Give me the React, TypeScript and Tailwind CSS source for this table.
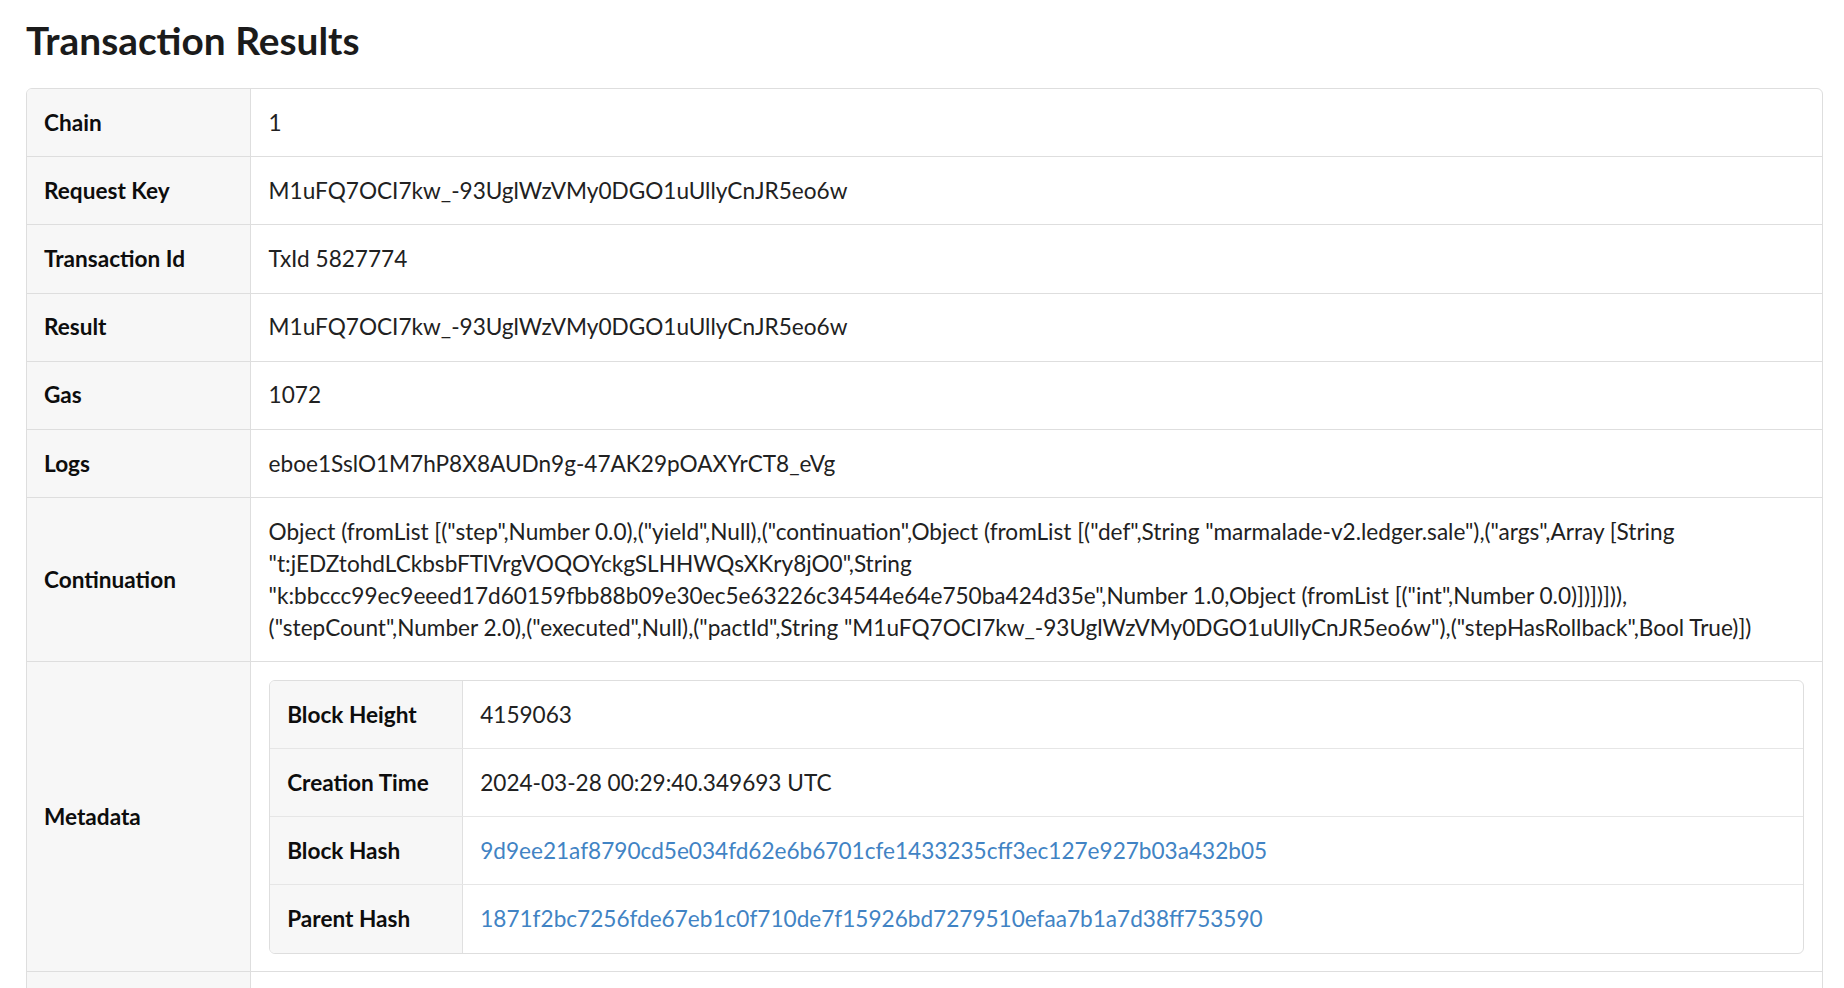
const rows: { label: string; value: string }[] = [
  { label: "Chain", value: "1" },
  { label: "Request Key", value: "M1uFQ7OCI7kw_-93UglWzVMy0DGO1uUllyCnJR5eo6w" },
  { label: "Transaction Id", value: "TxId 5827774" },
  { label: "Result", value: "M1uFQ7OCI7kw_-93UglWzVMy0DGO1uUllyCnJR5eo6w" },
  { label: "Gas", value: "1072" },
  { label: "Logs", value: "eboe1SslO1M7hP8X8AUDn9g-47AK29pOAXYrCT8_eVg" },
];

const continuation =
  'Object (fromList [("step",Number 0.0),("yield",Null),("continuation",Object (fromList [("def",String "marmalade-v2.ledger.sale"),("args",Array [String "t:jEDZtohdLCkbsbFTlVrgVOQOYckgSLHHWQsXKry8jO0",String "k:bbccc99ec9eeed17d60159fbb88b09e30ec5e63226c34544e64e750ba424d35e",Number 1.0,Object (fromList [("int",Number 0.0)])])])),("stepCount",Number 2.0),("executed",Null),("pactId",String "M1uFQ7OCI7kw_-93UglWzVMy0DGO1uUllyCnJR5eo6w"),("stepHasRollback",Bool True)])';

const meta: { label: string; value: string; link?: boolean }[] = [
  { label: "Block Height", value: "4159063" },
  { label: "Creation Time", value: "2024-03-28 00:29:40.349693 UTC" },
  { label: "Block Hash", value: "9d9ee21af8790cd5e034fd62e6b6701cfe1433235cff3ec127e927b03a432b05", link: true },
  { label: "Parent Hash", value: "1871f2bc7256fde67eb1c0f710de7f15926bd7279510efaa7b1a7d38ff753590", link: true },
];

function Row({ label, children, last }: { label: string; children: React.ReactNode; last?: boolean }) {
  return (
    <div className={`flex ${last ? "" : "border-b border-[#dedede]"}`}>
      <div className="w-[224px] shrink-0 flex items-center bg-[#f7f7f7] border-r border-[#dedede] px-[17px] py-[17.6px] font-bold text-[#0d0d0d]">
        {label}
      </div>
      <div className="flex-1 min-w-0 px-[17.6px] py-[17.6px] break-words">{children}</div>
    </div>
  );
}

export default function App() {
  return (
    <div className="min-h-screen bg-white pl-[26px] pr-[21px] pt-[16px] pb-10 font-['Lato','Noto_Sans',sans-serif] text-[22.6px] leading-[32px] text-[#212121]">
      <h1 className="text-[38.8px] leading-[49px] font-bold text-[#1b1b1b]">Transaction Results</h1>

      {/* Main result table */}
      <div className="mt-[23px] border border-[#dedede] rounded-[6px] overflow-hidden">
        {rows.map((r) => (
          <Row key={r.label} label={r.label}>
            {r.value}
          </Row>
        ))}
        <Row label="Continuation">{continuation}</Row>
        <Row label="Metadata">
          <div className="border border-[#dedede] rounded-[6px] overflow-hidden">
            {meta.map((m, i) => (
              <div key={m.label} className={`flex ${i < meta.length - 1 ? "border-b border-[#e6e6e6]" : ""}`}>
                <div className="w-[193px] shrink-0 bg-[#f7f7f7] border-r border-[#e0e0e0] px-[17.6px] py-[17.6px] font-bold text-[#0d0d0d]">
                  {m.label}
                </div>
                <div className="flex-1 min-w-0 px-[17.6px] py-[17.6px]">
                  {m.link ? (
                    <a href="#" className="text-[#4183c4]">
                      {m.value}
                    </a>
                  ) : (
                    m.value
                  )}
                </div>
              </div>
            ))}
          </div>
        </Row>
        <Row label="Events" last>
          <span>[]</span>
        </Row>
      </div>
    </div>
  );
}
